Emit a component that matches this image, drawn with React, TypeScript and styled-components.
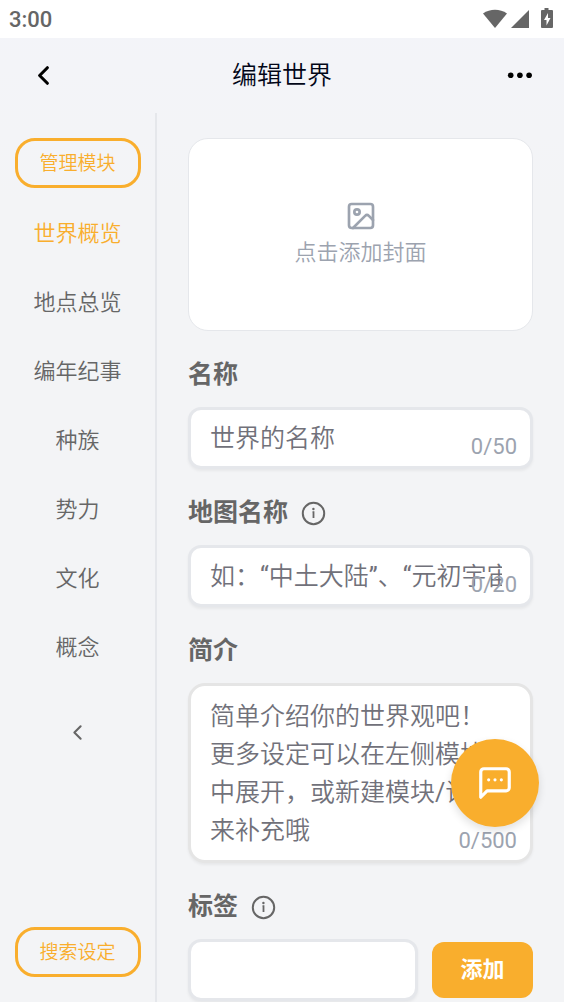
import React from "react";
import styled, { createGlobalStyle, css } from "styled-components";
import { ChevronLeft, Image as ImageIcon } from "lucide-react";

const accent = "#f9ae2d";
const ink = "#666666";
const line = "#e5e7eb";

const GlobalStyle = createGlobalStyle`
  * { box-sizing: border-box; }
  html, body, #root { height: 100%; }
  body { margin: 0; background: #f3f4f6; }
  body, button, input, textarea {
    font-family: Roboto, "Noto Sans CJK SC", sans-serif;
    font-weight: 350;
  }
  button { cursor: pointer; }
`;

const Page = styled.div`
  height: 100vh;
  display: flex;
  flex-direction: column;
  background: linear-gradient(#f3f4f9, #f3f4f6 200px);
`;

const StatusBar = styled.div`
  flex: none;
  height: 38px;
  padding: 0 10px 0 9px;
  display: flex;
  align-items: center;
  justify-content: space-between;
  background: #ffffff;
  color: ${ink};
  font-size: 22px;
  font-weight: 500;
`;

const StatusIcons = styled.svg`
  display: block;
  width: 72px;
  height: 24px;
  fill: ${ink};
`;

const Header = styled.header`
  flex: none;
  height: 75px;
  padding: 0 28px;
  display: flex;
  align-items: center;
  justify-content: space-between;
`;

const Title = styled.h1`
  margin: 0;
  font-size: 25px;
  line-height: 38px;
  font-weight: 350;
  color: #020617;
`;

const IconButton = styled.button<{ $color?: string }>`
  display: flex;
  padding: 0;
  border: 0;
  background: none;
  color: ${(p) => p.$color ?? "#000000"};
`;

const Columns = styled.div`
  flex: 1;
  min-height: 0;
  display: flex;
`;

const Sidebar = styled.aside`
  flex: none;
  width: 157px;
  padding: 25px 15px;
  display: flex;
  flex-direction: column;
  align-items: center;
  border-right: 2px solid ${line};
`;

const OutlineButton = styled.button`
  width: 126px;
  height: 50px;
  flex: none;
  padding: 0 0 4px;
  border: 3px solid ${accent};
  border-radius: 20px;
  background: transparent;
  color: ${accent};
  font-size: 19px;
`;

const ModuleNav = styled.nav`
  flex: 1;
  padding-top: 11px;
  display: flex;
  flex-direction: column;
  align-items: center;
`;

const ModuleLink = styled.a<{ $active?: boolean }>`
  height: 69px;
  line-height: 69px;
  font-size: 22px;
  text-decoration: none;
  color: ${(p) => (p.$active ? accent : ink)};
`;

const Collapse = styled(IconButton)`
  margin-top: 38px;
`;

const Content = styled.main`
  flex: 1;
  min-width: 0;
  overflow-y: auto;
  scrollbar-width: none;
  padding: 25px 31px;
  display: flex;
  flex-direction: column;
  gap: 24px;
`;

const Cover = styled.button`
  flex: none;
  height: 193px;
  padding: 0;
  display: flex;
  flex-direction: column;
  align-items: center;
  justify-content: center;
  gap: 4px;
  border: 1px solid ${line};
  border-radius: 20px;
  background: #ffffff;
  color: #9ca3af;
  font-size: 22px;
  line-height: 34px;
`;

const Field = styled.div`
  flex: none;
  display: flex;
  flex-direction: column;
  gap: 12px;
`;

const LabelRow = styled.div`
  display: flex;
  align-items: center;
  gap: 13px;
  color: ${ink};
`;

const Label = styled.label`
  font-size: 25px;
  line-height: 40px;
  font-weight: 700;
`;

const Box = styled.div`
  position: relative;
  display: flex;
  flex: 1;
  min-width: 0;
`;

const control = css`
  width: 100%;
  margin: 0;
  border: 3px solid ${line};
  background: #ffffff;
  box-shadow: 0 2px 3px rgba(0, 0, 0, 0.05);
  color: ${ink};
  font-family: Roboto, "Noto Sans CJK SC DemiLight", "Noto Sans CJK SC", sans-serif;
  font-size: 25px;
  font-weight: 400;
  outline: none;
  &::placeholder { color: #71717a; opacity: 1; }
`;

const TextInput = styled.input`
  ${control}
  height: 62px;
  padding: 0 28px 0 19px;
  border-radius: 13px;
`;

const TextArea = styled.textarea`
  ${control}
  height: 180px;
  padding: 12px 28px 10px 19px;
  border-color: #e5e5e5;
  border-radius: 17px;
  line-height: 38px;
  resize: none;
  overflow: hidden;
`;

const Counter = styled.span`
  position: absolute;
  right: 16px;
  bottom: 9px;
  font-size: 22px;
  line-height: 26px;
  font-weight: 400;
  color: #9ca3af;
`;

const TagRow = styled.div`
  display: flex;
  align-items: center;
  gap: 14px;
`;

const AddButton = styled.button`
  width: 101px;
  height: 56px;
  flex: none;
  padding: 0 0 6px;
  border: 0;
  border-radius: 12px;
  background: ${accent};
  color: #ffffff;
  font-size: 22px;
  font-weight: 700;
`;

const ChatButton = styled.button`
  position: fixed;
  right: 25px;
  bottom: 175px;
  width: 88px;
  height: 88px;
  padding: 0;
  display: flex;
  align-items: center;
  justify-content: center;
  border: 0;
  border-radius: 50%;
  background: ${accent};
  color: #ffffff;
  box-shadow: 0 4px 8px rgba(0, 0, 0, 0.12);
`;

const InfoIcon = () => (
  <svg width="25" height="25" viewBox="0 0 25 25" fill="none" stroke="currentColor" strokeWidth="2">
    <circle cx="12.5" cy="12.5" r="10.7" />
    <path d="M11.500 11.200h1v5.800" strokeWidth="1.800" />
    <circle cx="12.400" cy="8" r="1.200" fill="currentColor" stroke="none" />
  </svg>
);

const ChatIcon = () => (
  <svg width="38" height="38" viewBox="0 0 24 24" fill="none" stroke="currentColor" strokeWidth="2" strokeLinecap="round" strokeLinejoin="round">
    <path d="M21 15a2 2 0 0 1-2 2H7l-4 4V5a2 2 0 0 1 2-2h14a2 2 0 0 1 2 2z" />
    <path d="M8 10h.01M12 10h.01M16 10h.01" />
  </svg>
);

const modules = ["世界概览", "地点总览", "编年纪事", "种族", "势力", "文化", "概念"];

type FieldProps = {
  id: string;
  label: string;
  info?: boolean;
  children: React.ReactNode;
};

const FormField = ({ id, label, info, children }: FieldProps) => (
  <Field>
    <LabelRow>
      <Label htmlFor={id}>{label}</Label>
      {info && (
        <IconButton type="button" $color={ink} aria-label={`${label}说明`}>
          <InfoIcon />
        </IconButton>
      )}
    </LabelRow>
    {children}
  </Field>
);

export default function App() {
  return (
    <Page>
      <GlobalStyle />
      <StatusBar>
        <span>3:00</span>
        <StatusIcons viewBox="0 0 72 24" aria-hidden="true">
          <path d="M1 6.5C8 1.5 18 1.5 25 6.5L13 21z" />
          <path d="M47 3v18H29z" />
          <path d="M62.5 1h4v2H70a1 1 0 0 1 1 1v16a1 1 0 0 1-1 1H60a1 1 0 0 1-1-1V4a1 1 0 0 1 1-1h2.5zM66 6l-4 7h2.5v5.5l4-7.5H66z" fillRule="evenodd" />
        </StatusIcons>
      </StatusBar>
      <Header>
        <IconButton type="button" aria-label="返回">
          <ChevronLeft size={31} strokeWidth={2.4} />
        </IconButton>
        <Title>编辑世界</Title>
        <IconButton type="button" aria-label="更多">
          <svg width="31" height="31" viewBox="0 0 31 31" fill="currentColor">
            <circle cx="5.7" cy="15.2" r="2.8" />
            <circle cx="14.9" cy="15.2" r="2.8" />
            <circle cx="24.1" cy="15.2" r="2.8" />
          </svg>
        </IconButton>
      </Header>
      <Columns>
        <Sidebar>
          <OutlineButton type="button">管理模块</OutlineButton>
          <ModuleNav>
            {modules.map((name, i) => (
              <ModuleLink key={name} href="#" $active={i === 0}>
                {name}
              </ModuleLink>
            ))}
            <Collapse type="button" $color={ink} aria-label="收起">
              <ChevronLeft size={25} strokeWidth={2} />
            </Collapse>
          </ModuleNav>
          <OutlineButton type="button">搜索设定</OutlineButton>
        </Sidebar>
        <Content>
          <Cover type="button">
            <ImageIcon size={32} strokeWidth={2} />
            点击添加封面
          </Cover>
          <FormField id="name" label="名称">
            <Box>
              <TextInput id="name" maxLength={50} placeholder="世界的名称" />
              <Counter>0/50</Counter>
            </Box>
          </FormField>
          <FormField id="map" label="地图名称" info>
            <Box>
              <TextInput id="map" maxLength={20} placeholder="如：“中土大陆”、“元初宇宙”" />
              <Counter>0/20</Counter>
            </Box>
          </FormField>
          <FormField id="intro" label="简介">
            <Box>
              <TextArea
                id="intro"
                maxLength={500}
                placeholder={"简单介绍你的世界观吧！\n更多设定可以在左侧模块中展开，或新建模块/词条来补充哦"}
              />
              <Counter>0/500</Counter>
            </Box>
          </FormField>
          <FormField id="tag" label="标签" info>
            <TagRow>
              <Box>
                <TextInput id="tag" />
              </Box>
              <AddButton type="button">添加</AddButton>
            </TagRow>
          </FormField>
        </Content>
      </Columns>
      <ChatButton type="button" aria-label="聊天">
        <ChatIcon />
      </ChatButton>
    </Page>
  );
}
